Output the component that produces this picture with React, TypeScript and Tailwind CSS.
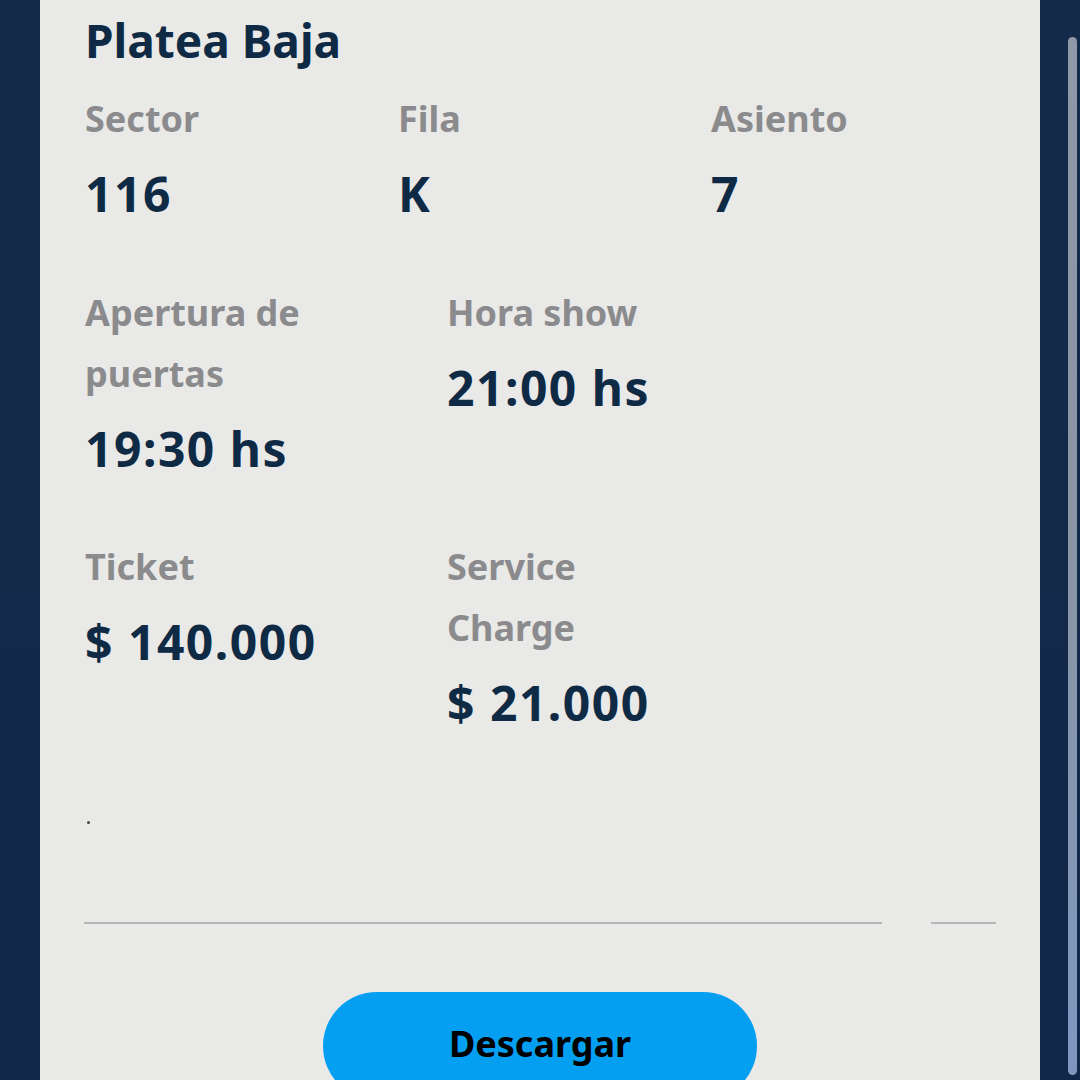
import React from 'react';

type Field = { label: string; value: string };

const topRow: Field[] = [
  { label: 'Sector', value: '116' },
  { label: 'Fila', value: 'K' },
  { label: 'Asiento', value: '7' },
];

const timeRow: Field[] = [
  { label: 'Apertura de puertas', value: '19:30 hs' },
  { label: 'Hora show', value: '21:00 hs' },
];

const priceRow: Field[] = [
  { label: 'Ticket', value: '$ 140.000' },
  { label: 'Service Charge', value: '$ 21.000' },
];

const Info: React.FC<{ field: Field; width: string }> = ({ field, width }) => (
  <div className={`${width} shrink-0`}>
    <p className="max-w-[250px] text-[36px] leading-[61px] font-bold text-[#8b8b8e] mb-[13px]">{field.label}</p>
    <p className="text-[48px] leading-[64px] font-bold tracking-[1.5px] text-[#0f2a44]">{field.value}</p>
  </div>
);

const App: React.FC = () => {
  return (
    <div className="relative w-full h-[1080px] overflow-hidden bg-gradient-to-b from-[#142a4b] via-[#13294a] to-[#11284a] font-['Noto_Sans',sans-serif]">
      <div className="ml-[40px] w-[1000px] h-full bg-[#e9e9e7] pl-[45px] pt-[10px]">
        <h1 className="text-[46px] leading-[60px] font-bold text-[#0f2a44]">Platea Baja</h1>

        <div className="flex mt-[18px]">
          {topRow.map(f => (
            <Info key={f.label} field={f} width="w-[313px]" />
          ))}
        </div>

        <div className="flex mt-[56px]">
          {timeRow.map(f => (
            <Info key={f.label} field={f} width="w-[362px]" />
          ))}
        </div>

        <div className="flex mt-[55px]">
          {priceRow.map(f => (
            <Info key={f.label} field={f} width="w-[362px]" />
          ))}
        </div>

        <div className="mt-[86px] ml-[2px] w-[3px] h-[3px] rounded-full bg-[#444]" />

        <div className="flex items-center gap-[49px] mt-[98px] -ml-[1px]">
          <div className="w-[798px] h-[2px] bg-[#b5b5b5]" />
          <div className="w-[65px] h-[2px] bg-[#b5b5b5]" />
        </div>

        <div className="flex justify-center mt-[68px] -ml-[45px]">
          <button className="w-[434px] h-[108px] rounded-full bg-[#049ff1] text-black text-[36px] font-bold pb-[4px]">
            Descargar
          </button>
        </div>
      </div>

      {/* scrollbar overlay */}
      <div className="absolute right-[3px] top-[37px] w-[9px] h-[1038px] rounded-full bg-gradient-to-b from-[#8e98a6] via-[#8a95a4] to-[#7f97c0]" />
    </div>
  );
};

export default App;
